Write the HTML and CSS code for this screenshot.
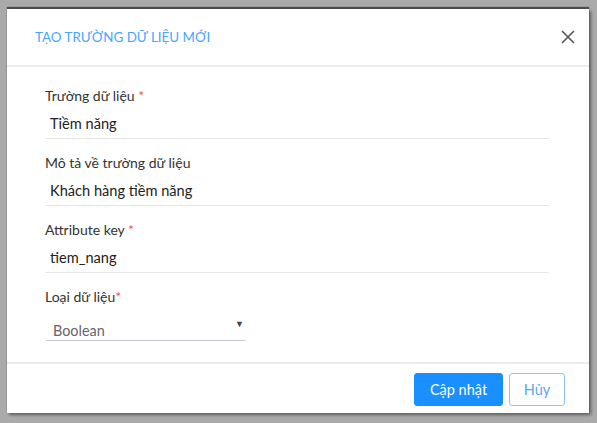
FILE: index.html
```html
<!DOCTYPE html>
<html lang="vi">
<head>
<meta charset="utf-8">
<title>Tạo trường dữ liệu mới</title>
<link rel="stylesheet" href="styles.css">
</head>
<body>
<div class="modal">
  <div class="modal-header">
    <h2 class="modal-title">TẠO TRƯỜNG DỮ LIỆU MỚI</h2>
    <button class="close-btn" aria-label="Đóng">
      <svg width="14" height="14" viewBox="0 0 14 14"><path d="M1 1 L13 13 M13 1 L1 13" stroke="#555" stroke-width="1.6" fill="none"/></svg>
    </button>
  </div>
  <div class="modal-body">
    <div class="field">
      <label class="label">Trường dữ liệu <span class="req">*</span></label>
      <div class="input">Tiềm năng</div>
    </div>
    <div class="field">
      <label class="label">Mô tả về trường dữ liệu</label>
      <div class="input">Khách hàng tiềm năng</div>
    </div>
    <div class="field">
      <label class="label">Attribute key <span class="req">*</span></label>
      <div class="input">tiem_nang</div>
    </div>
    <div class="field last">
      <label class="label">Loại dữ liệu<span class="req">*</span></label>
      <div class="select"><span>Boolean</span><span class="caret">▼</span></div>
    </div>
  </div>
  <div class="modal-footer">
    <button class="btn btn-primary">Cập nhật</button>
    <button class="btn btn-outline">Hủy</button>
  </div>
</div>
</body>
</html>
```
FILE: styles.css
```css
html, body {
  margin: 0;
  padding: 0;
  background: #aaaaaa;
  height: 100%;
  overflow: hidden;
}
body {
  font-family: Lato, "Open Sans", sans-serif;
  padding: 9px 0 0 7px;
  box-sizing: border-box;
}
.modal {
  width: 582px;
  height: 404px;
  background: #fff;
  box-shadow: 0 -2px 1px rgba(0,0,0,0.55), 2px 2px 3px rgba(0,0,0,0.45);
  display: flex;
  flex-direction: column;
}
.modal-header {
  height: 56px;
  border-bottom: 2px solid #ececec;
  display: flex;
  align-items: center;
  justify-content: space-between;
  padding: 0 14px 0 28px;
  box-sizing: content-box;
}
.modal-title {
  margin: 0;
  font-size: 13.4px;
  font-weight: 400;
  color: #4aa5ff;
}
.close-btn {
  background: none;
  border: 0;
  padding: 0;
  width: 14px;
  height: 14px;
  display: flex;
}
.modal-body {
  padding: 19px 40px 18px 38px;
  flex: 1;
}
.field {
  margin-bottom: 14px;
}
.field.last {
  margin-bottom: 0;
}
.label {
  display: block;
  font-size: 14px;
  line-height: 20px;
  color: #333;
  margin-bottom: 5px;
}
.req {
  color: #f5534f;
}
.input {
  height: 27px;
  line-height: 26px;
  padding-left: 5px;
  font-size: 14.6px;
  color: #222;
  border-bottom: 1px solid #e6e6e6;
}
.select {
  width: 201px;
  height: 29px;
  box-sizing: border-box;
  padding: 10px 2px 0 8px;
  line-height: 18px;
  font-size: 14.4px;
  color: #666;
  border-bottom: 1px solid #c3c8d2;
  border-radius: 0 0 2px 2px;
  display: flex;
  justify-content: space-between;
}
.caret {
  font-size: 9px;
  color: #444;
  line-height: 9px;
  margin-top: -3px;
}
.modal-footer {
  border-top: 2px solid #ececec;
  height: 51px;
  display: flex;
  justify-content: flex-end;
  align-items: flex-start;
  padding: 9px 24px 0 0;
  box-sizing: border-box;
  gap: 6px;
}
.btn {
  height: 33px;
  font-family: inherit;
  font-size: 14.5px;
  border-radius: 3px;
  padding: 0;
  cursor: pointer;
}
.btn-primary {
  width: 89px;
  background: #1a90ff;
  border: 1px solid #1a90ff;
  color: #fff;
}
.btn-outline {
  width: 56px;
  background: #fff;
  border: 1px solid #8fc4fb;
  color: #5aa7f5;
}
```
